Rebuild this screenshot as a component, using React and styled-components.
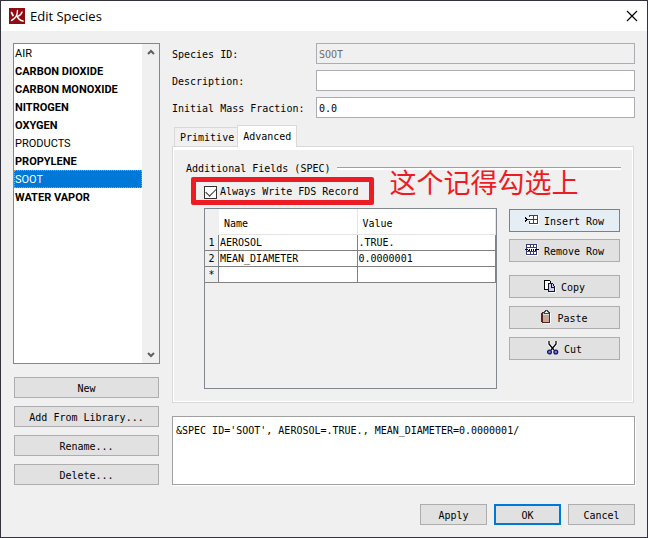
// libraries
import styled, { createGlobalStyle, css } from "styled-components";

const SPECIES = [
  { name: "AIR" },
  { name: "CARBON DIOXIDE", bold: true },
  { name: "CARBON MONOXIDE", bold: true },
  { name: "NITROGEN", bold: true },
  { name: "OXYGEN", bold: true },
  { name: "PRODUCTS" },
  { name: "PROPYLENE", bold: true },
  { name: "SOOT", selected: true },
  { name: "WATER VAPOR", bold: true },
];

const FIELDS = [
  { id: "species-id", label: "Species ID:", value: "SOOT", disabled: true },
  { id: "description", label: "Description:", value: "" },
  { id: "mass-fraction", label: "Initial Mass Fraction:", value: "0.0" },
];

const ROWS = [
  { head: "1", name: "AEROSOL", value: ".TRUE." },
  { head: "2", name: "MEAN_DIAMETER", value: "0.0000001" },
  { head: "*", name: "", value: "" },
];

const AppLogo = () => (
  <svg width="16" height="16" viewBox="0 0 16 16" aria-hidden="true">
    <rect width="16" height="16" fill="#8e0b0f" />
    <g fill="none" stroke="#fff" strokeLinecap="round">
      <path d="M8.5 2.5 C8.5 7 6.5 10.5 2.5 12.5" strokeWidth="1.4" />
      <path d="M8 8 C9 10.5 11 12.5 14 13" strokeWidth="1.7" />
      <path d="M2.5 4.5 L4 7.5" strokeWidth="1.7" />
      <path d="M13 4 C12.5 6 11 7.5 9 8.2" strokeWidth="1.3" />
    </g>
  </svg>
);

const CloseIcon = () => (
  <svg width="12" height="12" viewBox="0 0 12 12" aria-hidden="true">
    <path d="M1 1 L11 11 M11 1 L1 11" stroke="#000" strokeWidth="1.2" fill="none" />
  </svg>
);

const ChevronIcon = ({ down }) => (
  <svg width="8" height="6" viewBox="0 0 8 6" aria-hidden="true">
    <path
      d={down ? "M1 1 L4 4 L7 1" : "M1 5 L4 2 L7 5"}
      stroke="#606060"
      strokeWidth="2"
      fill="none"
    />
  </svg>
);

const InsertRowIcon = () => (
  <svg width="14" height="12" viewBox="0 0 14 12" shapeRendering="crispEdges" aria-hidden="true">
    <path d="M4 1h10v10H4z" fill="#fff" />
    <path
      d="M4 1.5h9M3 5.5h10M4 9.5h9M8.5 1v9M12.5 1v9M4.5 1v2M4.5 7v3"
      stroke="#3c3c78"
      fill="none"
    />
    <path d="M0 3h1v1h1v1h1v1H2v1H1v1H0V6h1V5H0z" fill="#000" />
  </svg>
);

const RemoveRowIcon = () => (
  <svg width="14" height="12" viewBox="0 0 14 12" shapeRendering="crispEdges" aria-hidden="true">
    <path d="M1 0h12v12H1z" fill="#fff" />
    <path
      d="M1 .5h11M1 3.5h11M1 7.5h11M1 10.5h11M1.5 0v11M11.5 0v11M5.5 0v4M8.5 0v4M5.5 7v4M8.5 7v4"
      stroke="#3c3c78"
      fill="none"
    />
    <path d="M0 5h3v1h1V5h1v1h1V5h1v1h1V5h1v1h1V5h4v1h-3v1h-1V6H9v1H8V6H7v1H6V6H5v1H3V6H0z" fill="#000" />
  </svg>
);

const CopyIcon = () => (
  <svg width="12" height="13" viewBox="0 0 12 13" shapeRendering="crispEdges" aria-hidden="true">
    <path d="M.5 .5h5l1 1v8h-6z" fill="#fff" stroke="#000" />
    <path d="M4.5 3.5h4l2 3v5h-6z" fill="#ccd0ea" stroke="#14142c" />
    <path d="M7.5 4v3H10" fill="none" stroke="#14142c" />
    <path d="M5 12.5h7M11.5 7v5" stroke="#fff" />
  </svg>
);

const PasteIcon = () => (
  <svg width="11" height="14" viewBox="0 0 11 14" shapeRendering="crispEdges" aria-hidden="true">
    <path d="M1.5 2.5h7v10h-7z" fill="#c8a894" stroke="#5a2020" />
    <path d="M0 3h1v9H0z" fill="#5a2020" />
    <path d="M9.5 3v10.5H2" fill="none" stroke="#fff" />
    <path d="M3.5 3.5v-2h1v-1h2v1h1v2z" fill="#eee" stroke="#444" />
    <path d="M2 4h6v1H2z" fill="#ddd" />
  </svg>
);

const CutIcon = () => (
  <svg width="12" height="14" viewBox="0 0 12 14" aria-hidden="true">
    <path d="M2 0v3l5 6M9 0v3L4 9" fill="none" stroke="#fff" strokeWidth="3" />
    <path d="M2 0v3l5 6M9 0v3L4 9" fill="none" stroke="#000" strokeWidth="1.3" />
    <circle cx="2.5" cy="11" r="1.9" fill="#7878d0" stroke="#18186a" strokeWidth="1.3" />
    <circle cx="8.8" cy="11" r="1.9" fill="#7878d0" stroke="#18186a" strokeWidth="1.3" />
  </svg>
);

const App = () => {
  return (
    <>
      <GlobalStyle />
      <Window>
        <TitleBar>
          <AppLogo />
          <h1>Edit Species</h1>
          <CloseButton type="button" aria-label="Close">
            <CloseIcon />
          </CloseButton>
        </TitleBar>

        <Content>
          <Sidebar>
            <ListBox>
              <SpeciesList role="listbox" aria-label="Species">
                {SPECIES.map(({ name, bold, selected }) => (
                  <SpeciesItem
                    key={name}
                    role="option"
                    aria-selected={!!selected}
                    $bold={bold}
                    $selected={selected}
                  >
                    {name}
                  </SpeciesItem>
                ))}
              </SpeciesList>
              <ScrollBar>
                <ChevronIcon />
                <ChevronIcon down />
              </ScrollBar>
            </ListBox>
            <ListActions>
              <Button type="button">New</Button>
              <Button type="button">Add From Library...</Button>
              <Button type="button">Rename...</Button>
              <Button type="button">Delete...</Button>
            </ListActions>
          </Sidebar>

          <Main>
            <Form>
              {FIELDS.map(({ id, label, value, disabled }) => (
                <Field key={id}>
                  <label htmlFor={id}>{label}</label>
                  <input id={id} type="text" defaultValue={value} disabled={disabled} />
                </Field>
              ))}
            </Form>

            <Tabs role="tablist">
              <Tab type="button" role="tab" aria-selected="false">
                Primitive
              </Tab>
              <Tab type="button" role="tab" aria-selected="true" $active>
                Advanced
              </Tab>
            </Tabs>

            <TabPanel role="tabpanel">
              <GroupTitle>Additional Fields (SPEC)</GroupTitle>
              <OptionRow>
                <CheckLabel>
                  <input type="checkbox" defaultChecked />
                  Always Write FDS Record
                  <Highlight />
                </CheckLabel>
                <Note>这个记得勾选上</Note>
              </OptionRow>
              <Editor>
                <Grid>
                  <table>
                    <thead>
                      <tr>
                        <td />
                        <th scope="col">Name</th>
                        <th scope="col">Value</th>
                      </tr>
                    </thead>
                    <tbody>
                      {ROWS.map(({ head, name, value }) => (
                        <tr key={head}>
                          <th scope="row">{head}</th>
                          <td>{name}</td>
                          <td>{value}</td>
                        </tr>
                      ))}
                    </tbody>
                  </table>
                </Grid>
                <Tools>
                  <ToolGroup $gap={7}>
                    <ToolButton type="button" $hot>
                      <InsertRowIcon />
                      Insert Row
                    </ToolButton>
                    <ToolButton type="button">
                      <RemoveRowIcon />
                      Remove Row
                    </ToolButton>
                  </ToolGroup>
                  <ToolGroup $gap={8}>
                    <ToolButton type="button">
                      <CopyIcon />
                      Copy
                    </ToolButton>
                    <ToolButton type="button">
                      <PasteIcon />
                      Paste
                    </ToolButton>
                    <ToolButton type="button">
                      <CutIcon />
                      Cut
                    </ToolButton>
                  </ToolGroup>
                </Tools>
              </Editor>
            </TabPanel>

            <Record
              aria-label="FDS record"
              readOnly
              value="&SPEC ID='SOOT', AEROSOL=.TRUE., MEAN_DIAMETER=0.0000001/"
            />
          </Main>
        </Content>

        <Footer>
          <Button type="button">Apply</Button>
          <Button type="button" $primary>
            OK
          </Button>
          <Button type="button">Cancel</Button>
        </Footer>
      </Window>
    </>
  );
};
export default App;

const GlobalStyle = createGlobalStyle`
  * {
    box-sizing: border-box;
  }
  body {
    margin: 0;
    color: #000;
    background: #f0f0f0;
  }
  body, button, input, textarea, table {
    font-family: "DejaVu Sans Mono", "Liberation Mono", monospace;
    font-size: 10px;
    line-height: 16px;
  }
`;

const Window = styled.div`
  display: flex;
  flex-direction: column;
  min-height: 100vh;
  border: 1px solid #34323c;
  background: #f0f0f0;
`;

const TitleBar = styled.header`
  display: flex;
  align-items: center;
  gap: 5px;
  height: 30px;
  padding: 0 9px 0 8px;
  background: #fff;
  h1 {
    flex: 1;
    margin: 0;
    font: 400 13px/16px "Open Sans", "Noto Sans", sans-serif;
  }
`;

const CloseButton = styled.button`
  display: grid;
  place-items: center;
  padding: 0;
  border: 0;
  background: none;
`;

const Content = styled.div`
  display: flex;
  flex: 1;
  gap: 12px;
  padding: 12px 12px 0;
`;

const Sidebar = styled.aside`
  display: flex;
  flex-direction: column;
  gap: 13px;
  width: 147px;
`;

const ListBox = styled.div`
  display: flex;
  flex: 1;
  border: 1px solid #828790;
  background: #fff;
`;

const SpeciesList = styled.ul`
  flex: 1;
  margin: 0;
  padding: 0;
  list-style: none;
`;

const SpeciesItem = styled.li`
  height: 18px;
  padding: 0 1px;
  font: ${({ $bold }) => ($bold ? 700 : 400)} 11px/20px Roboto, sans-serif;
  ${({ $selected }) =>
    $selected &&
    css`
      color: #fff;
      background: #0078d7;
      outline: 1px dotted #ff8728;
      outline-offset: -1px;
    `}
`;

const ScrollBar = styled.div`
  display: flex;
  flex-direction: column;
  align-items: center;
  justify-content: space-between;
  width: 17px;
  padding: 5px 0;
  background: #f0f0f0;
`;

const Button = styled.button`
  height: 21px;
  padding: 2px 0 0;
  border: 1px solid #adadad;
  color: #000;
  background: #e1e1e1;
  ${({ $primary }) => $primary && "border: 2px solid #0078d7;"}
`;

const ListActions = styled.div`
  display: grid;
  gap: 8px;
  padding: 0 1px;
`;

const Main = styled.main`
  display: flex;
  flex: 1;
  flex-direction: column;
  min-width: 0;
`;

const Form = styled.div`
  display: grid;
  gap: 6px;
`;

const Field = styled.div`
  display: grid;
  grid-template-columns: 144px 1fr;
  align-items: center;
  label {
    padding-top: 2px;
  }
  input {
    height: 21px;
    padding: 2px 2px 0;
    border: 1px solid #abadb3;
    color: #000;
    background: #fff;
    &:disabled {
      color: #6d6d6d;
      background: #f0f0f0;
    }
  }
`;

const Tabs = styled.div`
  display: flex;
  align-items: flex-end;
  margin-top: 7px;
  padding-left: 2px;
`;

const Tab = styled.button`
  height: 19px;
  padding: 2px 3px 0 5px;
  border: 1px solid #d9d9d9;
  border-width: 1px 0 0 1px;
  color: #000;
  background: #f0f0f0;
  ${({ $active }) =>
    $active &&
    css`
      z-index: 1;
      height: 22px;
      margin-bottom: -1px;
      padding: 0 5px;
      border-width: 1px 1px 0;
      background: #fff;
    `}
`;

const TabPanel = styled.section`
  flex: 1;
  margin-right: 1px;
  padding: 11px 12px 11px 13px;
  border: 1px solid #d9d9d9;
  box-shadow: inset 0 3px #fff, inset 0 0 0 1px #fff;
`;

const GroupTitle = styled.h2`
  display: flex;
  align-items: center;
  gap: 6px;
  height: 22px;
  margin: 0;
  font-size: 10px;
  font-weight: 400;
  line-height: 24px;
  &::after {
    content: "";
    flex: 1;
    height: 2px;
    margin-bottom: 2px;
    border-top: 1px solid #a0a0a0;
    background: #fff;
  }
`;

const OptionRow = styled.div`
  display: flex;
  align-items: center;
  gap: 31px;
  height: 24px;
  padding-left: 18px;
`;

const CheckLabel = styled.label`
  position: relative;
  display: flex;
  align-items: center;
  gap: 3px;
  input {
    appearance: none;
    display: grid;
    place-items: center;
    width: 13px;
    height: 13px;
    margin: 0;
    border: 1px solid #333;
    background: #fff;
    &:checked::before {
      content: "";
      width: 9px;
      height: 5px;
      margin-bottom: 3px;
      border: solid #333;
      border-width: 0 0 1px 1px;
      rotate: -45deg;
    }
  }
`;

const Highlight = styled.span`
  position: absolute;
  inset: -7px -16px -5px -13px;
  border: 5px solid #ed1c24;
  border-radius: 2px;
`;

const Note = styled.strong`
  margin-bottom: 20px;
  color: #ed1c24;
  font: 400 27px/28px "Noto Sans CJK SC", sans-serif;
  white-space: nowrap;
`;

const Editor = styled.div`
  display: flex;
  gap: 12px;
  padding: 4px 1px 0 18px;
`;

const Grid = styled.div`
  flex: 1;
  min-height: 181px;
  border: 1px solid #828790;
  table {
    width: 100%;
    table-layout: fixed;
    border-collapse: separate;
    border-spacing: 0;
  }
  th,
  td {
    height: 16px;
    padding: 0 1px;
    font-weight: 400;
    line-height: 15px;
    text-align: left;
    white-space: nowrap;
  }
  thead td {
    width: 14px;
  }
  thead th {
    height: 26px;
    padding: 3px 0 0 5px;
    border-right: 1px solid #e5e5e5;
    border-bottom: 1px solid #e5e5e5;
    background: #fff;
  }
  tbody th,
  tbody td {
    border-right: 1px solid #828282;
    border-bottom: 1px solid #828282;
  }
  tbody th {
    padding: 0;
    text-align: center;
  }
  tbody td {
    background: #fff;
  }
`;

const Tools = styled.div`
  display: flex;
  flex-direction: column;
  gap: 13px;
  width: 111px;
  padding-top: 1px;
`;

const ToolGroup = styled.div`
  display: grid;
  gap: ${({ $gap }) => $gap}px;
`;

const ToolButton = styled(Button)`
  display: flex;
  align-items: center;
  justify-content: center;
  gap: 5px;
  height: 23px;
  svg {
    margin-bottom: 3px;
  }
  ${({ $hot }) =>
    $hot &&
    css`
      border-color: #4a8ec2;
      background: #e5edf5;
    `}
`;

const Record = styled.textarea`
  height: 69px;
  margin-top: 13px;
  padding: 6px 3px;
  border: 1px solid #a0a0a0;
  color: #000;
  background: #fff;
  box-shadow: 1px 1px #fff;
  resize: none;
`;

const Footer = styled.footer`
  display: grid;
  grid-template-columns: repeat(3, 67px);
  justify-content: end;
  gap: 7px;
  padding: 19px 12px 12px;
`;
